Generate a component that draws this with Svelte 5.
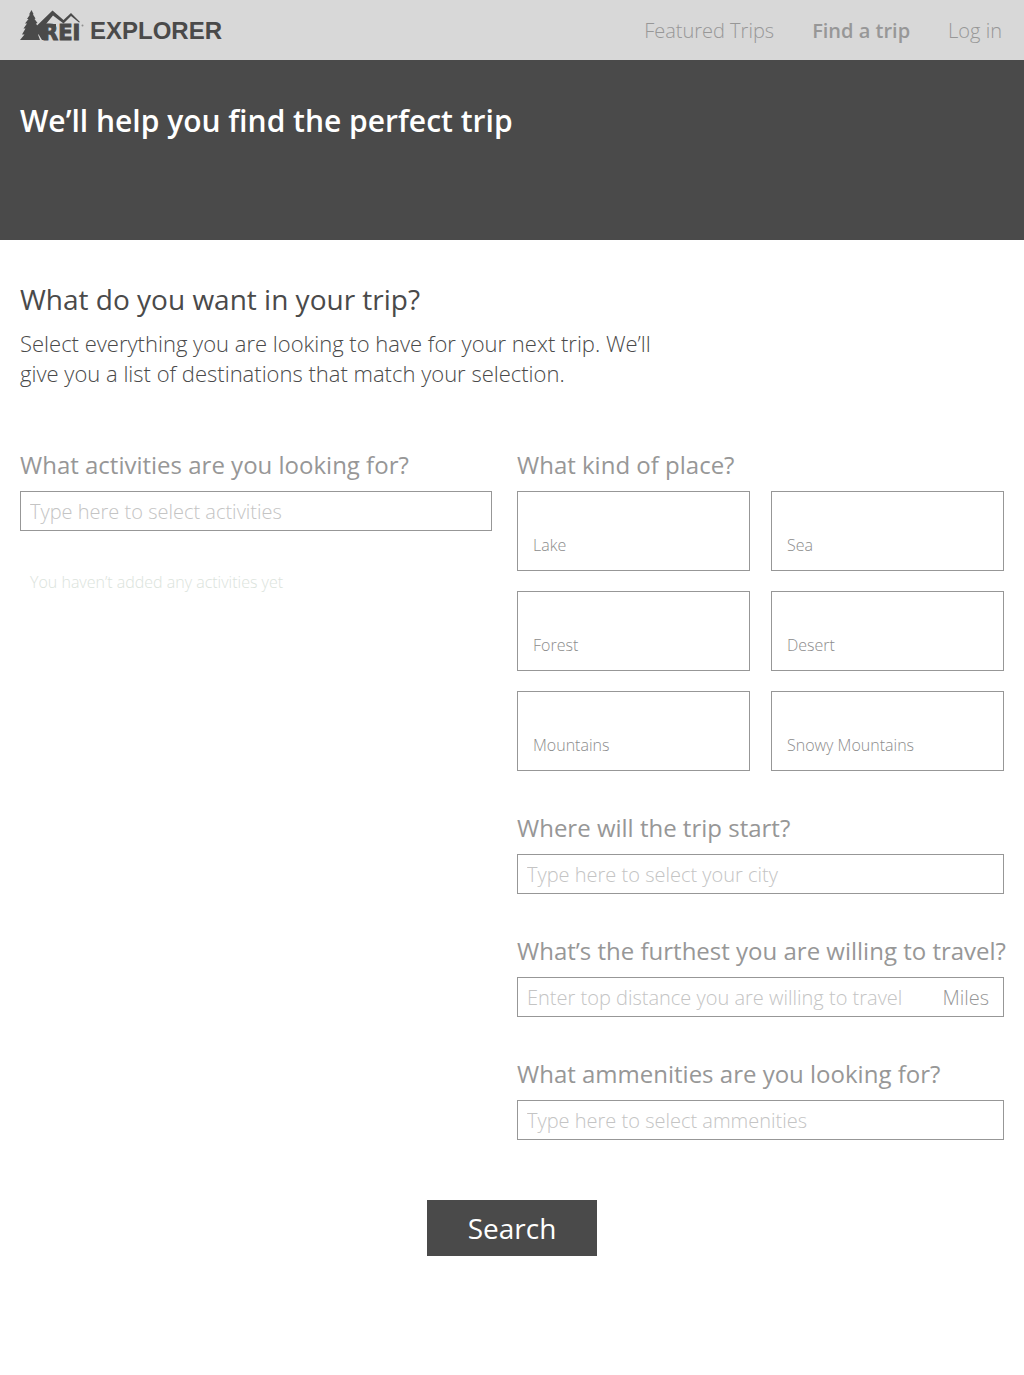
<script>
  const places = ['Lake', 'Sea', 'Forest', 'Desert', 'Mountains', 'Snowy Mountains'];
  let selected = $state([]);

  function toggle(place) {
    selected = selected.includes(place)
      ? selected.filter((p) => p !== place)
      : [...selected, place];
  }
</script>

<header class="topbar">
  <a class="brand" href="#home">
    <svg class="logo" viewBox="0 0 65 36" aria-label="REI">
      <!-- pine tree -->
      <path d="M11.500 0 L13.500 4 L13 4.500 L15.500 8.500 L14.500 9 L17.500 13 L16 13.500 L18.500 18 L17 18.500 L20 24 L18 24.500 L20 30 H0 L4.500 24.500 H2 L5.500 18.500 H3.500 L7 13.500 H5 L8.500 9 H7 L10 4.500 H9 Z" />
      <!-- mountain ridge -->
      <path d="M16 16.500 L32.500 .5 L43.500 10 L51 3 L60 12 L59 12.500 L51 6 L43.500 13.500 L33 5.500 L26 14 H36 V17 H26 V30 H22 L16 20 Z" />
      <text x="22" y="30">REI</text>
      <circle cx="62.500" cy="15.500" r="1" class="mark" />
    </svg>
    <span class="name">EXPLORER</span>
  </a>
  <nav>
    <a href="#featured">Featured Trips</a>
    <a href="#find" class="current" aria-current="page">Find a trip</a>
    <a href="#login">Log in</a>
  </nav>
</header>

<section class="hero">
  <h1>We’ll help you find the perfect trip</h1>
</section>

<main>
  <h2>What do you want in your trip?</h2>
  <p class="intro">
    Select everything you are looking to have for your next trip. We’ll give you a list of
    destinations that match your selection.
  </p>

  <form onsubmit={(e) => e.preventDefault()}>
    <div class="columns">
      <div class="column">
        <div class="group">
          <label class="question" for="activities">What activities are you looking for?</label>
          <div class="field">
            <input id="activities" type="text" placeholder="Type here to select activities" />
          </div>
          <p class="empty">You haven’t added any activities yet</p>
        </div>
      </div>

      <div class="column">
        <div class="group" role="group" aria-labelledby="place-title">
          <span class="question" id="place-title">What kind of place?</span>
          <div class="places">
            {#each places as place}
              <button
                type="button"
                class="place"
                class:chosen={selected.includes(place)}
                aria-pressed={selected.includes(place)}
                onclick={() => toggle(place)}>{place}</button>
            {/each}
          </div>
        </div>
        <div class="group">
          <label class="question" for="city">Where will the trip start?</label>
          <div class="field">
            <input id="city" type="text" placeholder="Type here to select your city" />
          </div>
        </div>
        <div class="group">
          <label class="question" for="distance">What’s the furthest you are willing to travel?</label>
          <div class="field">
            <input id="distance" type="text" placeholder="Enter top distance you are willing to travel" />
            <span class="unit">Miles</span>
          </div>
        </div>
        <div class="group">
          <label class="question" for="ammenities">What ammenities are you looking for?</label>
          <div class="field">
            <input id="ammenities" type="text" placeholder="Type here to select ammenities" />
          </div>
        </div>
      </div>
    </div>
    <button type="submit" class="search">Search</button>
  </form>
</main>

<style>
  :global(body) {
    background: #fff;
    color: #4a4a4a;
    font-family: 'Open Sans', 'Noto Sans', sans-serif;
  }
  * {
    box-sizing: border-box;
  }
  h1,
  h2,
  p {
    margin: 0;
  }
  .topbar {
    display: flex;
    justify-content: space-between;
    align-items: center;
    min-height: 60px;
    padding: 2px 22px 0 20px;
    background: #d8d8d8;
  }
  .brand {
    display: flex;
    align-items: flex-end;
    gap: 5px;
    padding-bottom: 3px;
    color: #4a4a4a;
    text-decoration: none;
  }
  .logo {
    width: 65px;
    height: 36px;
    margin-bottom: 3px;
    overflow: visible;
    fill: currentColor;
  }
  .logo text {
    font: bold 21px 'DejaVu Sans', sans-serif;
    stroke: currentColor;
    stroke-width: 1px;
  }
  .mark {
    fill: #8f8f8f;
  }
  .name {
    font: bold 24px/36px 'Liberation Sans', Arial, sans-serif;
  }
  nav {
    display: flex;
    gap: 38px;
  }
  nav a {
    color: #979797;
    font-size: 20px;
    font-weight: 300;
    line-height: 28px;
    text-decoration: none;
  }
  nav .current {
    font-weight: 600;
  }
  .hero {
    min-height: 180px;
    padding: 40px 20px;
    background: #4a4a4a;
  }
  h1 {
    color: #fff;
    font-size: 30px;
    font-weight: 600;
    line-height: 42px;
  }
  main {
    padding: 40px 20px;
  }
  h2 {
    font-size: 28px;
    font-weight: 400;
    line-height: 38px;
  }
  .intro {
    max-width: 640px;
    margin-top: 10px;
    font-size: 22px;
    font-weight: 300;
    line-height: 30px;
  }
  form {
    display: flex;
    flex-direction: column;
    align-items: center;
    gap: 60px;
    margin-top: 61px;
  }
  .columns {
    display: grid;
    grid-template-columns: 472fr 487fr;
    gap: 25px;
    width: 100%;
  }
  .column {
    display: flex;
    flex-direction: column;
    gap: 41px;
    min-width: 0;
  }
  .group {
    display: flex;
    flex-direction: column;
    gap: 10px;
  }
  .question {
    color: #979797;
    font-size: 24px;
    line-height: 32px;
    white-space: nowrap;
  }
  .field {
    display: flex;
    align-items: center;
    height: 40px;
    border: 1px solid #979797;
  }
  input {
    flex: 1;
    min-width: 0;
    height: 38px;
    padding: 0 9px;
    border: 0;
    background: none;
    color: #4a4a4a;
    font: 300 20px 'Open Sans', 'Noto Sans', sans-serif;
  }
  input::placeholder {
    color: #c4c4c4;
    opacity: 1;
  }
  .unit {
    padding-right: 14px;
    color: #979797;
    font-size: 20px;
    font-weight: 300;
  }
  .empty {
    margin-top: 30px;
    padding-left: 10px;
    color: #dbe3dc;
    font-size: 16px;
    font-weight: 300;
    line-height: 22px;
  }
  .places {
    display: grid;
    grid-template-columns: 1fr 1fr;
    gap: 20px 21px;
  }
  .place {
    display: flex;
    align-items: flex-end;
    height: 80px;
    padding: 14px 15px;
    border: 1px solid #979797;
    background: #fff;
    color: #8c8c8c;
    font: 300 16px/22px 'Open Sans', 'Noto Sans', sans-serif;
  }
  .place.chosen {
    background: #d8d8d8;
    color: #4a4a4a;
  }
  .search {
    min-width: 170px;
    height: 56px;
    padding: 0 40px;
    border: 0;
    background: #4a4a4a;
    color: #fff;
    font: 400 28px 'Open Sans', 'Noto Sans', sans-serif;
  }
</style>
